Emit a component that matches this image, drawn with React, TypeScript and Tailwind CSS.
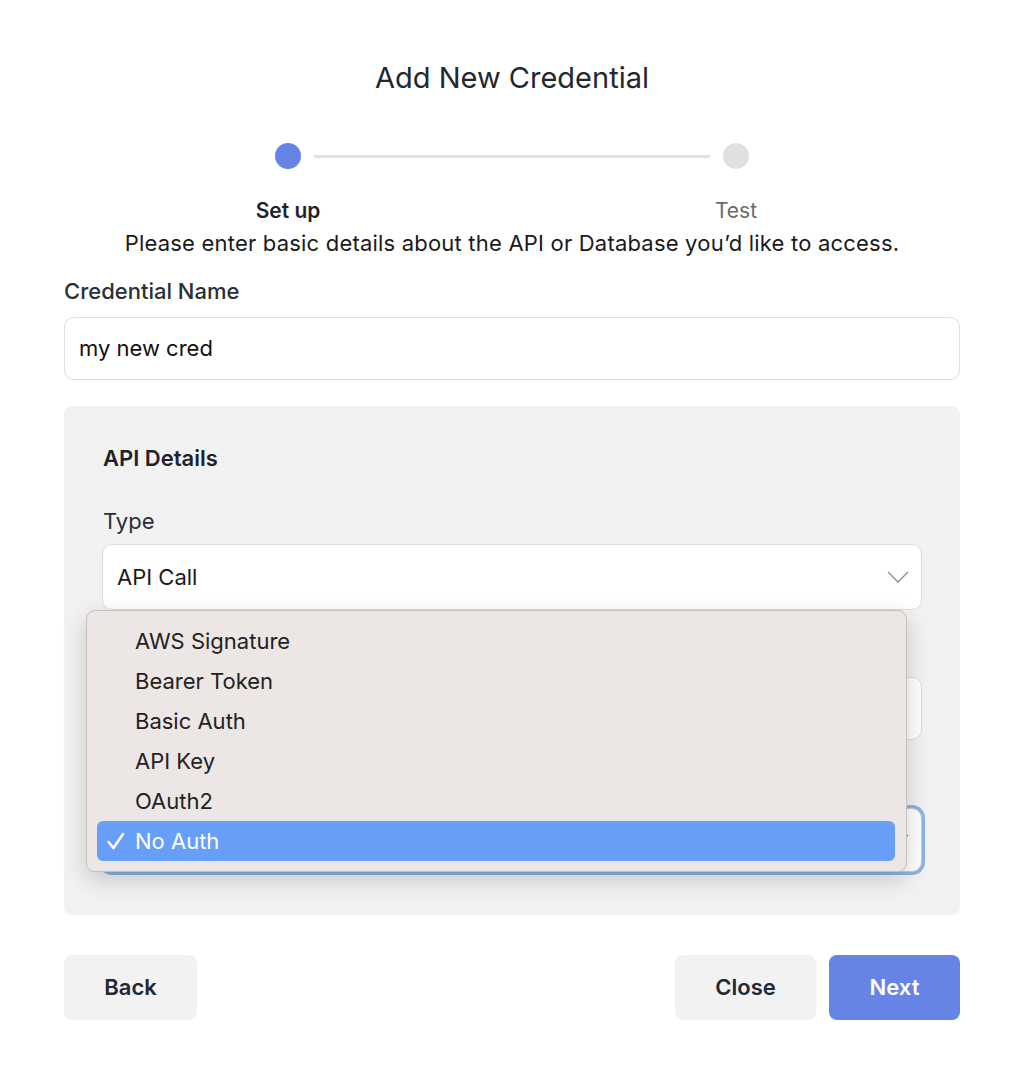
import React from "react";

function Chevron() {
  return (
    <svg width="22" height="12" viewBox="0 0 22 12" fill="none" className="shrink-0">
      <polyline points="1,1 11,11 21,1" stroke="#8a8a8a" strokeWidth="1.3" fill="none" />
    </svg>
  );
}

const items = ["AWS Signature", "Bearer Token", "Basic Auth", "API Key", "OAuth2", "No Auth"];

export default function App() {
  return (
    <div
      className="w-[1022px] min-h-[1082px] bg-white text-[#1f2328] flex flex-col pl-[64px] pr-[62px] pt-[60px]"
      style={{ fontFamily: "Inter, 'Noto Sans', sans-serif" }}
    >
      <h1 className="text-[29px] leading-[36px] text-center text-[#222831] font-normal">Add New Credential</h1>

      {/* stepper */}
      <div className="mt-[47px] flex items-center justify-center">
        <div className="w-[26px] h-[26px] rounded-full bg-[#6684e5]" />
        <div className="w-[396px] h-[3px] bg-[#e0e0e0] mx-[13px]" />
        <div className="w-[26px] h-[26px] rounded-full bg-[#e0e0e0]" />
      </div>
      <div className="mt-[28px] flex justify-center">
        <div className="w-[448px] flex justify-between text-[21px] leading-[28px]">
          <span className="w-[0px] flex justify-center whitespace-nowrap font-semibold text-[#1f2328]">Set up</span>
          <span className="w-[0px] flex justify-center whitespace-nowrap text-[#6b6b6b]">Test</span>
        </div>
      </div>
      <p className="mt-[4px] text-[22px] leading-[28px] text-center text-[#1a1a1a] whitespace-nowrap tracking-[0.2px]">
        Please enter basic details about the API or Database you’d like to access.
      </p>

      <label className="mt-[20px] text-[22px] leading-[28px] font-medium text-[#2a2f36]">Credential Name</label>
      <div className="mt-[12px] h-[63px] rounded-[10px] border border-[#dedede] flex items-center px-[14px] text-[22px] text-[#111]">
        my new cred
      </div>

      {/* panel */}
      <div className="relative mt-[26px] bg-[#f2f2f2] rounded-[8px] pt-[38px] pb-[43px] px-[38px] flex flex-col">
        <div className="text-[22px] leading-[28px] font-semibold text-[#1f2328] pl-[1px]">API Details</div>

        <div className="mt-[35px] text-[22px] leading-[28px] text-[#2a2f36] pl-[1px]">Type</div>
        <div className="mt-[9px] h-[66px] bg-white rounded-[10px] border border-[#dcdcdc] flex items-center justify-between pl-[14px] pr-[12px] text-[22px] text-[#1a1a1a]">
          <span>API Call</span>
          <Chevron />
        </div>

        <div className="mt-[31px] text-[22px] leading-[28px] text-[#2a2f36] pl-[1px] invisible">Base URL</div>
        <div className="mt-[8px] h-[63px] bg-white rounded-[10px] border border-[#dcdcdc]" />

        <div className="mt-[31px] text-[22px] leading-[28px] text-[#2a2f36] pl-[1px] invisible">Authentication</div>
        <div className="mt-[9px] h-[64px] bg-white rounded-[10px] border border-[#c9c9c9] ring-[3px] ring-[#8db4e2] flex items-center justify-between pl-[14px] pr-[12px] text-[22px]">
          <span className="invisible">No Auth</span>
          <Chevron />
        </div>

        {/* dropdown menu */}
        <div className="absolute left-[22px] top-[204px] w-[821px] py-[10px] pl-[10px] pr-[11px] bg-[#ece7e4] border border-[#c4c0bd] rounded-[9px] shadow-[0_8px_24px_rgba(0,0,0,0.18)]">
          {items.map((it) => {
            const sel = it === "No Auth";
            return (
              <div
                key={it}
                className={
                  sel
                    ? "h-[40px] rounded-[6px] bg-[#679ef8] text-white flex items-center text-[22px]"
                    : "h-[40px] flex items-center text-[22px] text-[#222]"
                }
              >
                <span className="w-[38px] flex justify-center">
                  {sel ? (
                    <svg width="20" height="20" viewBox="0 0 20 20" fill="none">
                      <path d="M2.5 11 L7.5 17 L17 3" stroke="white" strokeWidth="2.6" strokeLinecap="round" strokeLinejoin="round" />
                    </svg>
                  ) : null}
                </span>
                <span>{it}</span>
              </div>
            );
          })}
        </div>
      </div>

      {/* buttons */}
      <div className="mt-[40px] flex items-center justify-between">
        <button className="h-[65px] w-[133px] rounded-[8px] bg-[#f2f2f2] text-[22px] font-semibold text-[#222831]">Back</button>
        <div className="flex gap-[13px]">
          <button className="h-[65px] w-[141px] rounded-[8px] bg-[#f2f2f2] text-[22px] font-semibold text-[#222831]">Close</button>
          <button className="h-[65px] w-[131px] rounded-[8px] bg-[#6684e5] text-[22px] font-semibold text-white">Next</button>
        </div>
      </div>
    </div>
  );
}
